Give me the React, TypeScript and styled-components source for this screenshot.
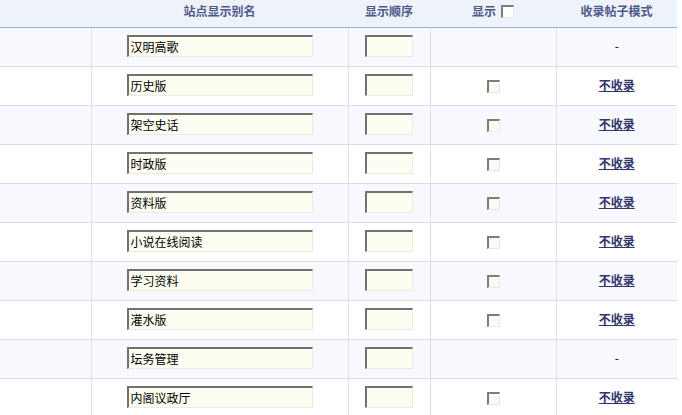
import React from "react";
import styled, { createGlobalStyle } from "styled-components";

const Global = createGlobalStyle`
  html, body { margin: 0; padding: 0; background: #ffffff; }
  body { font-family: "Noto Sans CJK SC", "Liberation Sans", sans-serif; font-size: 12px; color: #000; }
`;

const Table = styled.table`
  width: 677px;
  border-collapse: collapse;
  table-layout: fixed;
`;

const HeadRow = styled.tr`
  background: #eef2fa;
`;

const Th = styled.th<{ $w: number }>`
  width: ${(p) => p.$w}px;
  height: 22px;
  padding: 0 0 5px 0;
  border-bottom: 1px solid #93b7c9;
  color: #4d5a88;
  font-size: 12px;
  line-height: 16px;
  font-weight: bold;
  text-align: center;
  vertical-align: middle;
  white-space: nowrap;
`;

const Row = styled.tr<{ $alt: boolean }>`
  background: ${(p) => (p.$alt ? "#f8f9fe" : "#ffffff")};
`;

const Td = styled.td`
  height: 39px;
  padding: 0 0 3px 0;
  box-sizing: border-box;
  border-bottom: 1px solid #d9dde8;
  border-left: 1px solid #dde1ea;
  text-align: center;
  vertical-align: middle;
  line-height: 16px;
  &:first-child { border-left: none; }
`;

const TextBox = styled.input<{ $w: number }>`
  box-sizing: border-box;
  width: ${(p) => p.$w}px;
  height: 22px;
  margin: 0;
  padding: 0 2px;
  background: #fdfdf1;
  border-top: 2px solid #717171;
  border-left: 2px solid #717171;
  border-bottom: 1px solid #ebebe2;
  border-right: 1px solid #ebebe2;
  font-family: "Noto Sans CJK SC", "Liberation Sans", sans-serif;
  font-size: 12px;
  color: #000;
  outline: none;
  vertical-align: middle;
`;

const Check = styled.input`
  appearance: none;
  box-sizing: border-box;
  width: 13px;
  height: 13px;
  margin: 0;
  background: #fbfbf4;
  border-top: 2px solid #7c7c7c;
  border-left: 2px solid #7c7c7c;
  border-bottom: 1px solid #e8e8e0;
  border-right: 1px solid #e8e8e0;
  vertical-align: middle;
`;

const HeadCheck = styled(Check)`
  margin-left: 5px;
  position: relative;
  top: -1px;
  background: #ffffff;
`;

const Link = styled.a`
  color: #33366a;
  font-weight: bold;
  text-decoration: underline;
  font-size: 12px;
  cursor: pointer;
`;

const Dash = styled.span`
  color: #000;
  font-size: 12px;
`;

const rows: { name: string; hasMode: boolean }[] = [
  { name: "汉明高歌", hasMode: false },
  { name: "历史版", hasMode: true },
  { name: "架空史话", hasMode: true },
  { name: "时政版", hasMode: true },
  { name: "资料版", hasMode: true },
  { name: "小说在线阅读", hasMode: true },
  { name: "学习资料", hasMode: true },
  { name: "灌水版", hasMode: true },
  { name: "坛务管理", hasMode: false },
  { name: "内阁议政厅", hasMode: true },
];

export default function App() {
  return (
    <>
      <Global />
      <Table>
        <thead>
          <HeadRow>
            <Th $w={91}></Th>
            <Th $w={257}>站点显示别名</Th>
            <Th $w={82}>显示顺序</Th>
            <Th $w={126}>
              显示
              <HeadCheck type="checkbox" readOnly />
            </Th>
            <Th $w={121}>收录帖子模式</Th>
          </HeadRow>
        </thead>
        <tbody>
          {rows.map((r, i) => (
            <Row key={r.name} $alt={i % 2 === 0}>
              <Td></Td>
              <Td>
                <TextBox $w={186} defaultValue={r.name} />
              </Td>
              <Td>
                <TextBox $w={48} defaultValue="" />
              </Td>
              <Td>{r.hasMode ? <Check type="checkbox" readOnly /> : null}</Td>
              <Td>{r.hasMode ? <Link>不收录</Link> : <Dash>-</Dash>}</Td>
            </Row>
          ))}
        </tbody>
      </Table>
    </>
  );
}
